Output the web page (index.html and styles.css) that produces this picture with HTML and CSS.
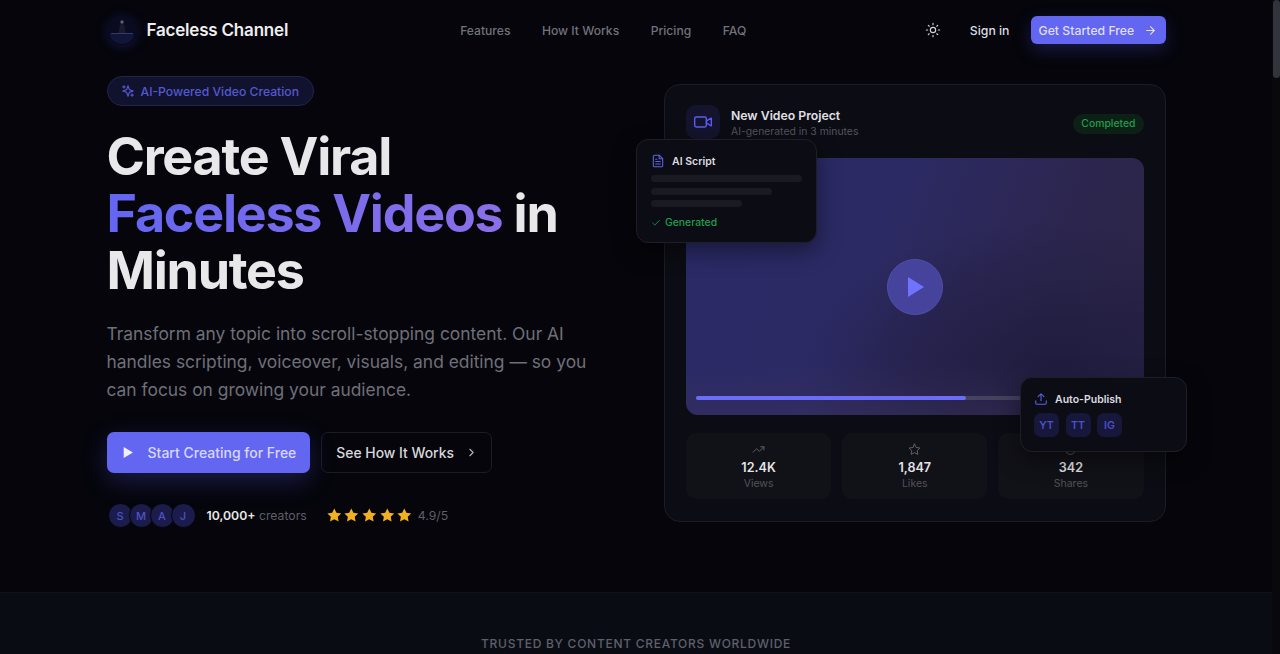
FILE: index.html
```html
<!DOCTYPE html>
<html lang="en">
<head>
    <meta charset="UTF-8">
    <title>Faceless Channel</title>
    <link rel="stylesheet" href="styles.css">
</head>
<body>
    <div class="page">
        <div class="container">
            <nav class="nav">
                <a class="brand" href="#">
                    <svg class="brand-logo" viewBox="0 0 30 30">
                        <circle cx="15" cy="15" r="15" fill="#0a0b20"/>
                        <path d="M3 19h24a12 10 0 0 1-24 0z" fill="#12153a"/>
                        <path d="M15 7l2.500 4 1 7h-7l1-7z" fill="#181a30"/>
                        <circle cx="15" cy="7" r="1.700" fill="#5a5d85"/>
                        <path d="M4 18.500h22" stroke="#34386a" stroke-width="1"/>
                    </svg>
                    <span>Faceless Channel</span>
                </a>
                <div class="nav-links">
                    <a href="#">Features</a>
                    <a href="#">How It Works</a>
                    <a href="#">Pricing</a>
                    <a href="#">FAQ</a>
                </div>
                <div class="nav-actions">
                    <svg class="icon sun" viewBox="0 0 24 24"><circle cx="12" cy="12" r="4"/><path d="M12 2v2M12 20v2M4.930 4.930l1.410 1.410M17.660 17.660l1.410 1.410M2 12h2M20 12h2M6.340 17.660l-1.410 1.410M19.070 4.930l-1.410 1.410"/></svg>
                    <a class="sign-in" href="#">Sign in</a>
                    <a class="btn-nav" href="#">Get Started Free
                        <svg class="icon" viewBox="0 0 24 24"><path d="M5 12h14M12 5l7 7-7 7"/></svg>
                    </a>
                </div>
            </nav>

            <section class="hero">
                <div class="hero-left">
                    <div class="badge">
                        <svg class="icon" viewBox="0 0 24 24"><path d="M12 3l1.900 5.800a2 2 0 0 0 1.300 1.300L21 12l-5.800 1.900a2 2 0 0 0-1.300 1.300L12 21l-1.900-5.800a2 2 0 0 0-1.300-1.300L3 12l5.800-1.900a2 2 0 0 0 1.300-1.300z"/><path d="M5 3v4M19 17v4M3 5h4M17 19h4"/></svg>
                        AI-Powered Video Creation
                    </div>
                    <h1>Create Viral <span class="accent">Faceless Videos</span> in Minutes</h1>
                    <p class="lead">Transform any topic into scroll-stopping content. Our AI handles scripting, voiceover, visuals, and editing — so you can focus on growing your audience.</p>
                    <div class="cta-row">
                        <a class="btn-primary" href="#">
                            <svg class="play-small" viewBox="0 0 24 24"><path d="M5 2l17 10-17 10z"/></svg>
                            Start Creating for Free
                        </a>
                        <a class="btn-outline" href="#">See How It Works
                            <svg class="icon" viewBox="0 0 24 24"><path d="M9 18l6-6-6-6"/></svg>
                        </a>
                    </div>
                    <div class="social-proof">
                        <div class="avatars">
                            <span>S</span><span>M</span><span>A</span><span>J</span>
                        </div>
                        <div class="creators"><b>10,000+</b> creators</div>
                        <div class="rating">
                            <svg viewBox="0 0 24 24"><path d="M12 2l3.090 6.260L22 9.270l-5 4.870 1.180 6.880L12 17.770l-6.180 3.250L7 14.140 2 9.270l6.910-1.010z"/></svg>
                            <svg viewBox="0 0 24 24"><path d="M12 2l3.090 6.260L22 9.270l-5 4.870 1.180 6.880L12 17.770l-6.180 3.250L7 14.140 2 9.270l6.910-1.010z"/></svg>
                            <svg viewBox="0 0 24 24"><path d="M12 2l3.090 6.260L22 9.270l-5 4.870 1.180 6.880L12 17.770l-6.180 3.250L7 14.140 2 9.270l6.910-1.010z"/></svg>
                            <svg viewBox="0 0 24 24"><path d="M12 2l3.090 6.260L22 9.270l-5 4.870 1.180 6.880L12 17.770l-6.180 3.250L7 14.140 2 9.270l6.910-1.010z"/></svg>
                            <svg viewBox="0 0 24 24"><path d="M12 2l3.090 6.260L22 9.270l-5 4.870 1.180 6.880L12 17.770l-6.180 3.250L7 14.140 2 9.270l6.910-1.010z"/></svg>
                            <em>4.9/5</em>
                        </div>
                    </div>
                </div>

                <div class="hero-right">
                    <div class="preview-card">
                        <div class="preview-head">
                            <div class="video-icon">
                                <svg class="icon" viewBox="0 0 24 24"><rect x="2" y="6" width="14" height="12" rx="2"/><path d="M16 13l5.200 3.500a.5.5 0 0 0 .8-.4V7.900a.5.5 0 0 0-.8-.4L16 11"/></svg>
                            </div>
                            <div class="preview-title">
                                <h3>New Video Project</h3>
                                <p>AI-generated in 3 minutes</p>
                            </div>
                            <span class="status">Completed</span>
                        </div>
                        <div class="video">
                            <div class="play-btn">
                                <svg viewBox="0 0 24 24"><path d="M5 2l16 10-16 10z"/></svg>
                            </div>
                            <div class="progress"><div class="progress-fill"></div></div>
                        </div>
                        <div class="stats">
                            <div class="stat">
                                <svg class="icon" viewBox="0 0 24 24"><path d="M22 7l-8.500 8.500-5-5L2 17"/><path d="M16 7h6v6"/></svg>
                                <strong>12.4K</strong>
                                <span>Views</span>
                            </div>
                            <div class="stat">
                                <svg class="icon" viewBox="0 0 24 24"><path d="M12 2l3.090 6.260L22 9.270l-5 4.870 1.180 6.880L12 17.770l-6.180 3.250L7 14.140 2 9.270l6.910-1.010z"/></svg>
                                <strong>1,847</strong>
                                <span>Likes</span>
                            </div>
                            <div class="stat">
                                <svg class="icon" viewBox="0 0 24 24"><circle cx="12" cy="12" r="9"/></svg>
                                <strong>342</strong>
                                <span>Shares</span>
                            </div>
                        </div>
                    </div>

                    <div class="float-card script-card">
                        <div class="float-title">
                            <svg class="icon" viewBox="0 0 24 24"><path d="M14 2H6a2 2 0 0 0-2 2v16a2 2 0 0 0 2 2h12a2 2 0 0 0 2-2V8z"/><path d="M14 2v6h6M16 13H8M16 17H8M10 9H8"/></svg>
                            AI Script
                        </div>
                        <div class="script-line line-1"></div>
                        <div class="script-line line-2"></div>
                        <div class="script-line line-3"></div>
                        <div class="generated">
                            <svg class="icon" viewBox="0 0 24 24"><path d="M20 6L9 17l-5-5"/></svg>
                            Generated
                        </div>
                    </div>

                    <div class="float-card publish-card">
                        <div class="float-title">
                            <svg class="icon" viewBox="0 0 24 24"><path d="M21 15v4a2 2 0 0 1-2 2H5a2 2 0 0 1-2-2v-4"/><path d="M17 8l-5-5-5 5M12 3v12"/></svg>
                            Auto-Publish
                        </div>
                        <div class="platforms">
                            <span>YT</span><span>TT</span><span>IG</span>
                        </div>
                    </div>
                </div>
            </section>
        </div>

        <section class="trusted">
            <p>TRUSTED BY CONTENT CREATORS WORLDWIDE</p>
        </section>
    </div>
    <div class="scrollbar"><div class="scrollbar-thumb"></div></div>
</body>
</html>
```

FILE: styles.css
```css
* {
    margin: 0;
    padding: 0;
    box-sizing: border-box;
}

html, body {
    height: 654px;
    overflow: hidden;
}

body {
    background: #05050b;
    color: #ededf0;
    font-family: 'Inter', sans-serif;
}

a {
    color: inherit;
    text-decoration: none;
}

.icon {
    width: 16px;
    height: 16px;
    fill: none;
    stroke: currentColor;
    stroke-width: 2;
    stroke-linecap: round;
    stroke-linejoin: round;
    flex: none;
}

.page {
    width: 1272px;
}

.container {
    width: 1059px;
    height: 592px;
    margin: 0 auto;
}

/* nav */
.nav {
    display: flex;
    align-items: center;
    height: 60px;
    position: relative;
}

.brand {
    display: flex;
    align-items: center;
    gap: 10px;
    font-size: 17px;
    font-weight: 600;
    color: #eeeef0;
    letter-spacing: -0.2px;
}

.brand-logo {
    width: 30px;
    height: 30px;
    border-radius: 50%;
    box-shadow: 0 2px 12px rgba(60, 60, 190, 0.3);
}

.nav-links {
    display: flex;
    gap: 31.600px;
    margin-left: 172px;
    font-size: 12.100px;
    font-weight: 500;
    color: #72727b;
}

.nav-actions {
    display: flex;
    align-items: center;
    margin-left: auto;
    font-size: 12.250px;
    font-weight: 500;
}

.sun {
    color: #d4d4d8;
    stroke-width: 1.700;
}

.sign-in {
    margin-left: 29px;
    color: #dcdce0;
}

.btn-nav {
    display: flex;
    align-items: center;
    justify-content: space-between;
    width: 135px;
    height: 28px;
    margin-left: 21px;
    padding: 0 9px 0 8px;
    background: #6366f1;
    border-radius: 6px;
    color: #dfdffa;
    white-space: nowrap;
    box-shadow: 0 6px 18px rgba(79, 80, 220, 0.28);
}

.btn-nav .icon {
    width: 13px;
    height: 13px;
}

/* hero */
.hero {
    display: grid;
    grid-template-columns: 1fr 1fr;
    gap: 56px;
    align-items: center;
    padding-top: 16px;
}

.badge {
    display: flex;
    align-items: center;
    gap: 6px;
    width: fit-content;
    height: 30px;
    padding: 0 14px 0 13px;
    background: #11122e;
    border: 1px solid #23244d;
    border-radius: 15px;
    font-size: 12.200px;
    font-weight: 500;
    color: #5558cf;
}

.badge .icon {
    width: 14px;
    height: 14px;
}

h1 {
    margin-top: 22px;
    font-size: 52px;
    line-height: 57px;
    font-weight: 700;
    letter-spacing: -1.250px;
    color: #e8e8ea;
}

.accent {
    background: linear-gradient(90deg, #6366f1, #8b6fe8);
    -webkit-background-clip: text;
    background-clip: text;
    color: transparent;
}

.lead {
    margin-top: 21px;
    width: 490px;
    font-size: 17.400px;
    line-height: 28px;
    color: #6f6f78;
}

.cta-row {
    display: flex;
    gap: 11px;
    margin-top: 28px;
}

.btn-primary {
    display: flex;
    align-items: center;
    gap: 14px;
    height: 41px;
    padding: 0 14px;
    background: #6366f1;
    border-radius: 7px;
    font-size: 14px;
    font-weight: 500;
    color: #d8d8fa;
    box-shadow: 0 8px 26px rgba(79, 80, 220, 0.3);
}

.play-small {
    width: 13px;
    height: 13px;
    fill: #eeeefc;
}

.btn-outline {
    display: flex;
    align-items: center;
    gap: 11px;
    height: 41px;
    padding: 0 13px 0 14px;
    border: 1px solid #1c1c24;
    border-radius: 7px;
    font-size: 13.900px;
    font-weight: 500;
    color: #d8d8dc;
}

.btn-outline .icon {
    width: 13px;
    height: 13px;
    color: #b5b5bb;
}

.social-proof {
    display: flex;
    align-items: center;
    margin-top: 30px;
    font-size: 12.250px;
}

.avatars {
    display: flex;
    margin-left: 1px;
}

.avatars span {
    display: flex;
    align-items: center;
    justify-content: center;
    width: 25px;
    height: 25px;
    margin-right: -4px;
    border-radius: 50%;
    background: #1b1c4c;
    border: 1px solid #05050b;
    font-size: 11px;
    font-weight: 500;
    color: #4f52c4;
}

.creators {
    margin-left: 15px;
    color: #5f5f68;
}

.creators b {
    font-weight: 600;
    color: #e8e8ea;
}

.rating {
    display: flex;
    align-items: center;
    gap: 1px;
    margin-left: 19px;
}

.rating svg {
    width: 16.600px;
    height: 16.600px;
    fill: #f0b020;
}

.rating em {
    margin-left: 4px;
    font-style: normal;
    color: #5f5f68;
}

/* preview */
.hero-right {
    position: relative;
    margin-top: 2px;
}

.preview-card {
    height: 438px;
    padding: 20px 21px 21px;
    background: #0c0c14;
    border: 1px solid #1c1c24;
    border-radius: 16px;
}

.preview-head {
    display: flex;
    align-items: center;
    height: 34px;
}

.video-icon {
    display: flex;
    align-items: center;
    justify-content: center;
    width: 34px;
    height: 34px;
    background: #14142e;
    border-radius: 10px;
    color: #5a5df0;
}

.video-icon .icon {
    width: 20px;
    height: 20px;
    stroke-width: 1.700;
}

.preview-title {
    margin-left: 11px;
    padding-top: 4px;
}

.preview-title h3 {
    font-size: 12.250px;
    line-height: 16px;
    font-weight: 600;
    color: #e0e0e4;
}

.preview-title p {
    font-size: 10.400px;
    line-height: 16px;
    color: #55555e;
}

.status {
    margin-left: auto;
    margin-top: 4px;
    padding: 3px 8px;
    background: #0d2016;
    border-radius: 10px;
    font-size: 10.400px;
    line-height: 14px;
    font-weight: 500;
    color: #1f9d4d;
}

.video {
    position: relative;
    display: flex;
    align-items: center;
    justify-content: center;
    height: 257px;
    margin-top: 19px;
    background:
        linear-gradient(180deg, transparent 80%, rgba(60, 50, 90, 0.35) 100%),
        radial-gradient(ellipse at 82% 82%, #1f1c3f 0%, rgba(31, 28, 63, 0) 50%),
        linear-gradient(110deg, #2a2a68 0%, #2c2a64 40%, #2c264e 75%, #2e2646 100%);
    border-radius: 12px;
}

.play-btn {
    display: flex;
    align-items: center;
    justify-content: center;
    width: 56px;
    height: 56px;
    background: #45439c;
    border: 1px solid #524fa4;
    border-radius: 50%;
}

.play-btn svg {
    width: 24px;
    height: 24px;
    fill: #6f73ff;
}

.progress {
    position: absolute;
    left: 10px;
    right: 10px;
    bottom: 15px;
    height: 4px;
    background: #45415f;
    border-radius: 2px;
}

.progress-fill {
    width: 61.700%;
    height: 100%;
    background: #6a6df5;
    border-radius: 2px;
}

.stats {
    display: grid;
    grid-template-columns: repeat(3, 1fr);
    gap: 11px;
    margin-top: 18px;
}

.stat {
    display: flex;
    flex-direction: column;
    align-items: center;
    height: 66px;
    padding-top: 10px;
    background: #111118;
    border-radius: 10px;
}

.stat .icon {
    width: 13px;
    height: 13px;
    color: #6a6a72;
    stroke-width: 1.600;
}

.stat strong {
    margin-top: 3px;
    font-size: 12.600px;
    line-height: 18px;
    font-weight: 600;
    color: #e4e4e8;
}

.stat span {
    font-size: 10.500px;
    line-height: 14px;
    color: #52525a;
}

/* floating cards */
.float-card {
    position: absolute;
    background: #0c0d14;
    border: 1px solid #1e1e28;
    border-radius: 12px;
    box-shadow: 0 8px 24px rgba(0, 0, 0, 0.45);
}

.float-title {
    display: flex;
    align-items: center;
    gap: 7px;
    font-size: 10.500px;
    font-weight: 600;
    color: #dcdce0;
}

.float-title .icon {
    width: 14px;
    height: 14px;
    color: #5f62e6;
    stroke-width: 1.800;
}

.script-card {
    left: -28px;
    top: 55px;
    width: 181px;
    height: 104px;
    padding: 14px;
}

.script-line {
    height: 7px;
    margin-top: 5.500px;
    background: #1a1a22;
    border-radius: 4px;
}

.script-card .float-title {
    margin-bottom: 7px;
}

.line-2 {
    width: 80%;
}

.line-3 {
    width: 60%;
}

.generated {
    display: flex;
    align-items: center;
    gap: 4px;
    margin-top: 9px;
    font-size: 10.400px;
    font-weight: 500;
    color: #1f9d4d;
}

.generated .icon {
    width: 10px;
    height: 10px;
}

.publish-card {
    left: 356px;
    top: 293px;
    width: 167px;
    height: 75px;
    padding: 14px 13px;
}

.platforms {
    display: flex;
    gap: 6.500px;
    margin-top: 7px;
}

.platforms span {
    display: flex;
    align-items: center;
    justify-content: center;
    width: 25px;
    height: 24px;
    background: #16173a;
    border-radius: 7px;
    font-size: 10.500px;
    font-weight: 600;
    color: #4d50c8;
}

/* trusted */
.trusted {
    height: 62px;
    padding-top: 44px;
    background: #0a0c14;
    border-top: 1px solid #10121b;
    text-align: center;
}

.trusted p {
    font-size: 12px;
    line-height: 14px;
    font-weight: 500;
    letter-spacing: 0.730px;
    color: #5f606a;
}

.scrollbar {
    position: fixed;
    top: 0;
    right: 0;
    width: 8px;
    height: 654px;
    background: #08080d;
}

.scrollbar-thumb {
    width: 7px;
    height: 78px;
    margin-left: 1px;
    background: #33333b;
    border-radius: 4px;
}
```
